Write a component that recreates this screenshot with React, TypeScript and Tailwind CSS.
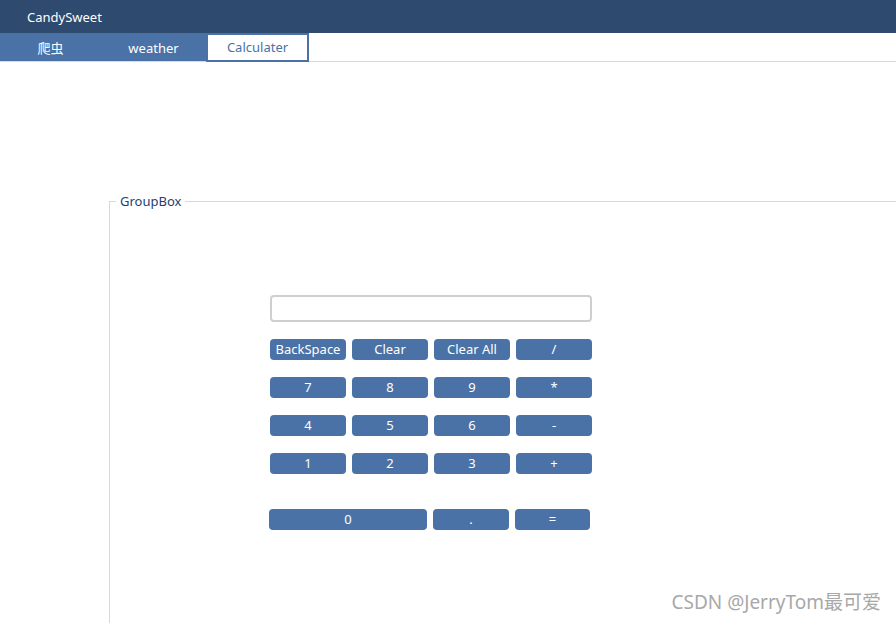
const rows = [
  ["BackSpace", "Clear", "Clear All", "/"],
  ["7", "8", "9", "*"],
  ["4", "5", "6", "-"],
  ["1", "2", "3", "+"],
];

const font = { fontFamily: '"Noto Sans", "Noto Sans CJK SC", sans-serif' };

function Key({ label, className = "w-[76px]" }: { label: string; className?: string }) {
  return (
    <button
      className={`${className} h-[21px] rounded-[4px] bg-[#4a72a6] text-[13px] leading-none text-white`}
    >
      {label}
    </button>
  );
}

export default function App() {
  return (
    <div
      className="relative flex h-[623px] w-[896px] flex-col overflow-hidden bg-white"
      style={font}
    >
      <header className="flex h-[33px] items-center bg-[#2e4a6e] pl-[27px] pt-[3px] text-[13px] text-white">
        CandySweet
      </header>
      <nav className="flex h-[29px] border-b border-[#d9d9d9]">
        <div className="flex w-[101px] items-center justify-center bg-[#4a72a6] pt-[3px] text-[13px] text-white">
          爬虫
        </div>
        <div className="flex w-[105px] items-center justify-center bg-[#4a72a6] pt-[3px] text-[13px] text-white">
          weather
        </div>
        <div className="-mb-px flex w-[103px] items-center justify-center border-2 border-[#4a72a6] bg-white pt-[1px] text-[13px] text-[#4a72a6]">
          Calculater
        </div>
      </nav>

      <fieldset className="ml-[109px] mt-[130px] flex-1 border-l border-t border-[#d9d9d9]">
        <legend className="ml-[6px] px-[4px] text-[13px] text-[#1e3f73]">GroupBox</legend>
        <div className="mt-[83px] flex flex-col pl-[160px]">
          <input className="h-[27px] w-[322px] rounded-[4px] border-2 border-[#cfcfcf] outline-none" />
          <div className="mt-[17px] flex flex-col gap-[17px]">
            {rows.map((r, i) => (
              <div key={i} className="flex gap-[6px]">
                {r.map((k) => (
                  <Key key={k} label={k} />
                ))}
              </div>
            ))}
          </div>
          <div className="-ml-px mt-[35px] flex gap-[6px]">
            <Key label="0" className="w-[158px]" />
            <Key label="." />
            <Key label="=" className="w-[75px]" />
          </div>
        </div>
      </fieldset>

      <div className="absolute bottom-[7px] right-[15px] text-[19px] text-[#a8a8a8]">
        CSDN @JerryTom最可爱
      </div>
    </div>
  );
}
